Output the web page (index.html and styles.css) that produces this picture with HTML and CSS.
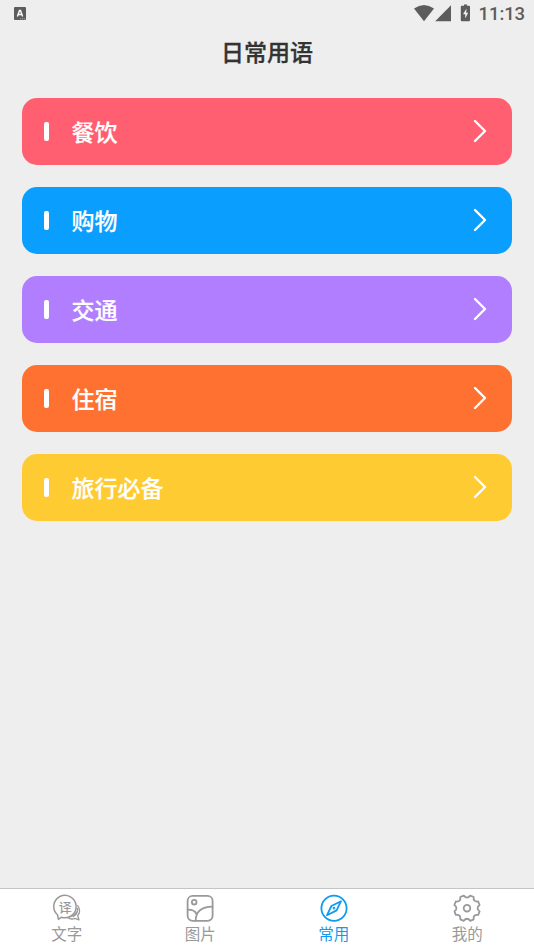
FILE: index.html
```html
<!DOCTYPE html>
<html lang="zh-CN">
<head>
<meta charset="utf-8">
<title>日常用语</title>
<link rel="stylesheet" href="styles.css">
</head>
<body>
<header class="status">
  <svg class="keyboard" width="12" height="13" viewBox="0 0 12 13"><rect width="12" height="13" rx="1" fill="#5c5c5c"/><path d="M3.400 9.500 5.500 3.500h1L8.600 9.500M4.200 7.500h3.600" fill="none" stroke="#fff" stroke-width="1.400"/><path d="M6 11.800h5" stroke="#bbb" stroke-width=".8" stroke-dasharray="1.300 .6"/></svg>
  <div class="system">
    <svg width="60" height="20" viewBox="0 0 60 20" fill="#5c5c5c"><path d="M0 5.500Q10-1.500 20 5.500L10 18.200Z"/><path d="M37 2.300V18.200H21.200Z"/><path d="M50 1.500h3v1.300h2q1 0 1 1v13.400q0 1-1 1h-7.200q-1 0-1-1V3.800q0-1 1-1h2.200z"/><path d="M52.500 5.400 49 11.300h2.200v4.200l3-5.700h-2z" fill="#eee"/></svg>
    <span class="time">11:13</span>
  </div>
</header>
<h1 class="title">日常用语</h1>
<main class="list">
  <a class="card food"><i class="mark"></i><span class="name">餐饮</span><svg class="arrow" viewBox="0 0 14 24"><path d="M2 2 12 12 2 22"/></svg></a>
  <a class="card shop"><i class="mark"></i><span class="name">购物</span><svg class="arrow" viewBox="0 0 14 24"><path d="M2 2 12 12 2 22"/></svg></a>
  <a class="card traffic"><i class="mark"></i><span class="name">交通</span><svg class="arrow" viewBox="0 0 14 24"><path d="M2 2 12 12 2 22"/></svg></a>
  <a class="card hotel"><i class="mark"></i><span class="name">住宿</span><svg class="arrow" viewBox="0 0 14 24"><path d="M2 2 12 12 2 22"/></svg></a>
  <a class="card travel"><i class="mark"></i><span class="name">旅行必备</span><svg class="arrow" viewBox="0 0 14 24"><path d="M2 2 12 12 2 22"/></svg></a>
</main>
<nav class="tabs">
  <a class="tab">
    <svg class="icon" viewBox="0 0 28 28"><path stroke-width="1.500" d="M8.500 23.200 5.400 25.400 4.600 21A11.200 11.200 0 1 1 8.500 23.200Z"/><path d="M24.700 11.500q3.700 5.500 0 10.200l1.300 4.300-4-1.600q-4 1.600-7.500-.9M24.500 14.500q.5 5.500-4.300 8M23.500 18q-2.500 4-7 4.800" stroke-width="1.300"/><text class="glyph" x="12.300" y="17.500">译</text></svg>
    <span>文字</span>
  </a>
  <a class="tab">
    <svg class="icon" viewBox="0 0 28 28"><rect x="1.600" y="1.800" width="25" height="25" rx="5"/><circle cx="8.200" cy="8.200" r="2.300"/><path d="M1.700 15.700Q8.700 15.700 10.200 19.700M9.700 26.700Q9.700 13 26.500 12.700"/></svg>
    <span>图片</span>
  </a>
  <a class="tab active">
    <svg class="icon" viewBox="0 0 28 28"><circle cx="14" cy="14.200" r="12.600"/><path d="M21 7.200 16.600 16.400 7 21.200 11.400 12Z"/><circle cx="14" cy="14.200" r=".5"/></svg>
    <span>常用</span>
  </a>
  <a class="tab">
    <svg class="icon" viewBox="-14 -14.200 28 28"><path d="M12.600-3.200Q8.500 0 12.600 3.200L11.200 6.700Q6 6 6.700 11.200L3.200 12.600Q0 8.500-3.200 12.600L-6.700 11.200Q-6 6-11.200 6.700L-12.600 3.200Q-8.500 0-12.600-3.200L-11.200-6.700Q-6-6-6.700-11.200L-3.200-12.600Q0-8.500 3.200-12.600L6.700-11.200Q6-6 11.200-6.700Z"/><circle r="3.300"/></svg>
    <span>我的</span>
  </a>
</nav>
</body>
</html>
```
FILE: styles.css
```css
* { box-sizing: border-box; }
body {
  margin: 0;
  height: 950px;
  display: flex;
  flex-direction: column;
  background: #eee;
  font-family: "Noto Sans CJK SC", sans-serif;
  overflow: hidden;
}
.status {
  height: 28px;
  display: flex;
  justify-content: space-between;
  padding: 3px 9px 0 14px;
}
.keyboard { margin-top: 4px; }
.system { display: flex; gap: 5px; }
.time {
  font: 500 18.500px/23px Roboto, sans-serif;
  letter-spacing: -.1px;
  color: #5c5c5c;
}
.title {
  margin: 0;
  height: 48px;
  font-size: 23px;
  line-height: 46px;
  font-weight: 500;
  text-align: center;
  color: #333;
  -webkit-text-stroke: .3px;
}
.list {
  flex: 1;
  display: flex;
  flex-direction: column;
  gap: 22.100px;
  padding: 22px 22px 0;
}
.card {
  height: 67px;
  display: flex;
  align-items: center;
  padding: 0 25px 0 22px;
  border-radius: 15px;
  color: #fff;
  font-size: 23px;
  line-height: 34px;
  font-weight: 500;
}
.food { background: #ff5f70; }
.shop { background: #0a9eff; }
.traffic { background: #b07eff; }
.hotel { background: #ff7131; }
.travel { background: #ffcb32; }
.mark {
  width: 5px;
  height: 19px;
  margin-right: 22.500px;
  border-radius: 2px;
  background: #fff;
}
.name {
  padding-bottom: 1.500px;
  -webkit-text-stroke: .2px;
}
.arrow {
  width: 14px;
  height: 24px;
  margin: 0 0 1px auto;
  fill: none;
  stroke: #fff;
  stroke-width: 2.400;
  stroke-linecap: round;
  stroke-linejoin: round;
}
.tabs {
  height: 62px;
  display: flex;
  border-top: 1px solid #c4c4c4;
  background: #fff;
}
.tab {
  flex: 1;
  display: flex;
  flex-direction: column;
  align-items: center;
  padding-top: 5px;
  color: #999;
  font-size: 15.500px;
  line-height: 22px;
}
.active { color: #0f9bf0; }
.icon {
  width: 28px;
  height: 28px;
  fill: none;
  stroke: currentColor;
  stroke-width: 1.800;
  stroke-linejoin: round;
  stroke-linecap: round;
  overflow: visible;
}
.glyph {
  font-size: 13px;
  font-weight: 500;
  text-anchor: middle;
  fill: currentColor;
  stroke: none;
}
```
